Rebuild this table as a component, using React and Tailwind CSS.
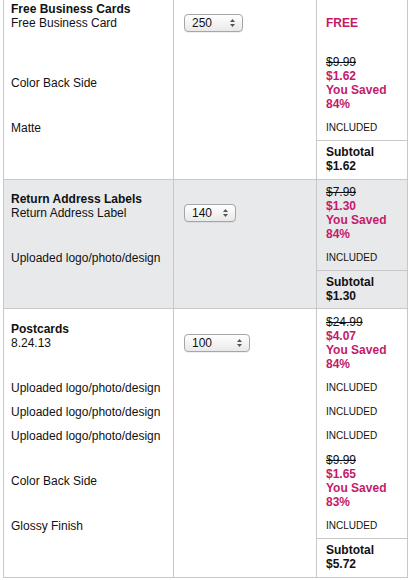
import React from "react";

const PINK = "text-[#c41a68]";

function Select({ value, w }) {
  return (
    <div
      className={`${w} h-[18px] rounded-[4px] border border-[#a6a6a6] bg-gradient-to-b from-white to-[#e9e9e9] flex items-center justify-between pl-[7px] pr-[7px] text-[12px] leading-[14px] text-[#111] shadow-[0_1px_0_rgba(0,0,0,0.06)]`}
    >
      <span>{value}</span>
      <svg width="5" height="8" viewBox="0 0 5 8" className="shrink-0">
        <path d="M0 3 L2.5 0 L5 3 Z" fill="#555" />
        <path d="M0 5 L2.5 8 L5 5 Z" fill="#555" />
      </svg>
    </div>
  );
}

function Row({ h, name, select, price, extra = "" }) {
  return (
    <div className={`flex ${h}`}>
      <div className={`w-[170px] border-r border-[#c8c8c8] flex items-center pl-[7px] ${extra}`}>
        {name}
      </div>
      <div className={`w-[143px] border-r border-[#c8c8c8] flex items-center pl-[10px] ${extra}`}>
        {select}
      </div>
      <div className={`flex-1 flex items-center pl-[9px] ${extra}`}>{price}</div>
    </div>
  );
}

function Title({ a, b }) {
  return (
    <div>
      <div className="font-bold">{a}</div>
      <div>{b}</div>
      <div>&nbsp;</div>
    </div>
  );
}

function Deal({ was, now, pct }) {
  return (
    <div className="font-bold">
      <div className="font-normal line-through">{was}</div>
      <div className={PINK}>{now}</div>
      <div className={PINK}>You Saved</div>
      <div className={PINK}>{pct}</div>
    </div>
  );
}

const Included = () => <div className="text-[10px] leading-[14px]">INCLUDED</div>;

function Subtotal({ h, amount }) {
  return (
    <div className={`flex ${h}`}>
      <div className="w-[170px] border-r border-[#c8c8c8]" />
      <div className="w-[143px] border-r border-[#c8c8c8]" />
      <div className="flex-1 border-t border-[#c8c8c8] pl-[9px] pt-[4px] font-bold">
        <div>Subtotal</div>
        <div>{amount}</div>
      </div>
    </div>
  );
}

export default function App() {
  return (
    <div className="w-[409px] h-[580px] bg-white overflow-hidden font-['Liberation_Sans',Arial,sans-serif] text-[12px] leading-[14px] text-[#111]">
      <div className="ml-[3px] w-[405px] border-l border-r border-[#c8c8c8]">
        {/* Section 1 */}
        <div className="border-b border-[#c8c8c8]">
          <Row
            h="h-[50px]"
            extra="pb-[4px]"
            name={<Title a="Free Business Cards" b="Free Business Card" />}
            select={<Select value="250" w="w-[59px]" />}
            price={<div className={`font-bold ${PINK}`}>FREE</div>}
          />
          <Row
            h="h-[65px]"
            name={<div>Color Back Side</div>}
            price={<Deal was="$9.99" now="$1.62" pct="84%" />}
          />
          <Row h="h-[25px]" name={<div>Matte</div>} price={<Included />} />
          <Subtotal h="h-[39px]" amount="$1.62" />
        </div>

        {/* Section 2 */}
        <div className="border-b border-[#c8c8c8] bg-[#e8e9eb]">
          <Row
            h="h-[65px]"
            name={<Title a="Return Address Labels" b="Return Address Label" />}
            select={<Select value="140" w="w-[52px]" />}
            price={<Deal was="$7.99" now="$1.30" pct="84%" />}
          />
          <Row h="h-[25px]" name={<div>Uploaded logo/photo/design</div>} price={<Included />} />
          <Subtotal h="h-[38px]" amount="$1.30" />
        </div>

        {/* Section 3 */}
        <div className="border-b border-[#c8c8c8]">
          <Row
            h="h-[67px]"
            name={<Title a="Postcards" b="8.24.13" />}
            select={<Select value="100" w="w-[66px]" />}
            price={<Deal was="$24.99" now="$4.07" pct="84%" />}
          />
          <Row h="h-[24px]" name={<div>Uploaded logo/photo/design</div>} price={<Included />} />
          <Row h="h-[24px]" name={<div>Uploaded logo/photo/design</div>} price={<Included />} />
          <Row h="h-[24px]" name={<div>Uploaded logo/photo/design</div>} price={<Included />} />
          <Row
            h="h-[65px]"
            name={<div>Color Back Side</div>}
            price={<Deal was="$9.99" now="$1.65" pct="83%" />}
          />
          <Row h="h-[25px]" name={<div>Glossy Finish</div>} price={<Included />} />
          <Subtotal h="h-[39px]" amount="$5.72" />
        </div>
      </div>
    </div>
  );
}
